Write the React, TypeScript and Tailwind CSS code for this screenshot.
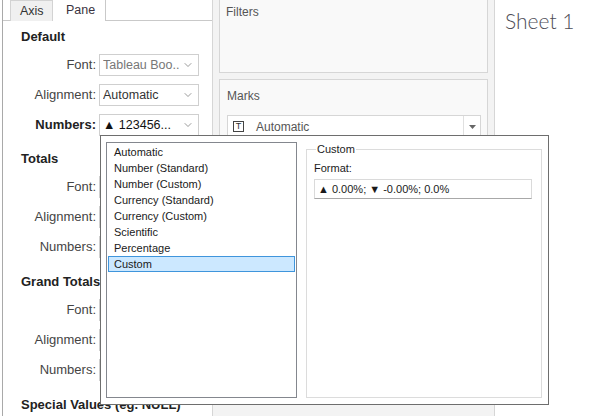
import { ChevronDown } from 'lucide-react'

const uiFont = { fontFamily: '"Liberation Sans", Arial, sans-serif' }

const listItems = [
  'Automatic',
  'Number (Standard)',
  'Number (Custom)',
  'Currency (Standard)',
  'Currency (Custom)',
  'Scientific',
  'Percentage',
  'Custom',
]

function Dropdown({ value, tone }: { value?: string; tone: string }) {
  return (
    <div className="ml-[3px] flex h-[22px] w-[100px] items-center justify-between border border-[#cfcfcf] bg-white pl-[3px] pr-[4px]">
      <span className={`overflow-hidden whitespace-nowrap text-[12.5px] ${tone}`}>{value}</span>
      <ChevronDown size={12} strokeWidth={1.4} className="shrink-0 text-[#707070]" />
    </div>
  )
}

function Row({
  label,
  bold,
  value,
  tone = 'text-[#333]',
  mt = 'mt-[8px]',
}: {
  label: string
  bold?: boolean
  value?: string
  tone?: string
  mt?: string
}) {
  return (
    <div className={`flex h-[22px] items-center ${mt}`}>
      <div
        className={`w-[93px] text-right text-[13px] ${bold ? 'font-bold text-[#222]' : 'text-[#444]'}`}
      >
        {label}
      </div>
      <Dropdown value={value} tone={tone} />
    </div>
  )
}

function Title({ text, mt }: { text: string; mt: string }) {
  return (
    <div className={`h-[18px] pl-[18px] text-[13px] font-bold leading-[18px] text-[#222] ${mt}`}>
      {text}
    </div>
  )
}

function LeftPanel() {
  return (
    <div className="w-[212px] shrink-0 bg-white pl-[2px]">
      <div className="h-full border-l border-[#a9a9a9]">
        <div className="flex h-[21px] border-b border-[#c9c9c9] pl-[7px]">
          <div className="flex h-[21px] w-[43px] items-center border border-b-0 border-[#d3d3d3] bg-[#f0f0f0] pl-[9px] text-[12.5px] text-[#333]">
            Axis
          </div>
          <div className="-mb-px flex h-[21px] w-[53px] items-center border-r border-[#c9c9c9] bg-white pl-[13px] text-[12.5px] text-[#3a3340]">
            Pane
          </div>
        </div>

        <Title text="Default" mt="mt-[7px]" />
        <Row label="Font:" value="Tableau Boo.." tone="text-[#777]" />
        <Row label="Alignment:" value="Automatic" />
        <Row label="Numbers:" bold value="▲ 123456..." tone="text-[#111]" />

        {/* the dropdowns of these rows sit under the format dialog */}
        <Title text="Totals" mt="mt-[14px]" />
        <Row label="Font:" />
        <Row label="Alignment:" />
        <Row label="Numbers:" />

        <Title text="Grand Totals" mt="mt-[15px]" />
        <Row label="Font:" />
        <Row label="Alignment:" />
        <Row label="Numbers:" />

        <Title text="Special Values (eg. NULL)" mt="mt-[15px]" />
      </div>
    </div>
  )
}

function MiddleColumn() {
  return (
    <div className="w-[283px] shrink-0 border-x border-[#d6d6d6] bg-[#f3f3f3] pl-[6px]">
      <div className="h-[73px] w-[269px] border border-t-0 border-[#d6d6d6] bg-[#f9f9f9] pl-[6px] pt-[3px] text-[12px] text-[#555]">
        Filters
      </div>
      <div className="mt-[6px] h-[300px] w-[269px] border border-[#d6d6d6] bg-[#f9f9f9] px-[7px] pt-[8px]">
        <div className="text-[12px] leading-[16px] text-[#555]">Marks</div>
        <div className="mt-[11px] flex h-[23px] w-[254px] items-stretch border border-[#d6d6d6] bg-white">
          <div className="flex flex-1 items-center gap-[12px] pl-[5px]">
            <span className="flex h-[11px] w-[11px] items-center justify-center border border-[#444] text-[9px] leading-none text-[#333]">
              T
            </span>
            <span className="text-[12px] text-[#555]">Automatic</span>
          </div>
          <div className="flex w-[17px] items-center justify-center border-l border-[#e0e0e0]">
            <svg width="7" height="4" viewBox="0 0 7 4">
              <polygon points="0,0 7,0 3.5,4" fill="#666" />
            </svg>
          </div>
        </div>
      </div>
    </div>
  )
}

function FormatDialog() {
  return (
    <div className="absolute left-[100px] top-[135px] flex h-[270px] w-[449px] border border-[#6e6e6e] bg-white pl-[5px] pr-[6px] pt-[6px] text-[11px] text-[#1a1a1a]">
      <div className="h-[256px] w-[191px] shrink-0 border border-[#84878e] p-px">
        {listItems.map((item) => (
          <div
            key={item}
            className={`flex h-[16px] items-center pl-[5px] ${
              item === 'Custom' ? 'border border-[#3f95dc] bg-[#cce8ff]' : 'border border-transparent'
            }`}
          >
            {item}
          </div>
        ))}
      </div>
      <fieldset className="ml-[9px] h-[256px] w-[236px] border border-[#dcdcdc] pl-[7px] pr-[9px]">
        <legend className="ml-[2px] px-[1px] leading-[14px] text-[#222]">Custom</legend>
        <div className="mt-[5px] leading-[14px]">Format:</div>
        <div className="mt-[4px] flex h-[20px] w-[218px] items-center border border-[#dadada] border-b-[#a8a8a8] pl-[3px]">
          ▲ 0.00%; ▼ -0.00%; 0.0%
        </div>
      </fieldset>
    </div>
  )
}

export default function App() {
  return (
    <div className="relative flex h-[416px] w-[600px] overflow-hidden bg-white" style={uiFont}>
      <LeftPanel />
      <MiddleColumn />
      <div className="flex-1 bg-white pl-[10px] pt-[8px]">
        <div
          className="text-[21px] font-light leading-[26px] text-[#4d4d57]"
          style={{ fontFamily: 'Lato, "Open Sans", sans-serif' }}
        >
          Sheet 1
        </div>
      </div>
      <FormatDialog />
    </div>
  )
}
